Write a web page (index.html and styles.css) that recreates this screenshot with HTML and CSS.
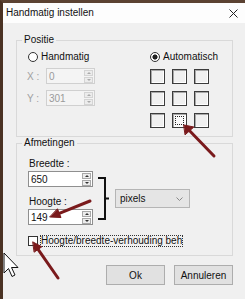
FILE: index.html
```html
<!DOCTYPE html>
<html lang="nl">
<head>
  <meta charset="UTF-8" />
  <title>Handmatig instellen</title>
  <link rel="stylesheet" href="styles.css">
</head>
<body>
  <div class="window">
    <div class="titlebar">
      <span class="title">Handmatig instellen</span>
      <svg class="close" width="9" height="9" viewBox="0 0 9 9">
        <path d="M0.5 0.5 L8.5 8.5 M8.5 0.5 L0.5 8.5" stroke="#222" stroke-width="1" fill="none"/>
      </svg>
    </div>

    <div class="content">
      <fieldset class="group">
        <legend>Positie</legend>
        <div class="pos-inner">
          <div class="col-left">
            <label class="radio"><span class="dot"></span>Handmatig</label>
            <div class="field">
              <span class="lbl">X :</span>
              <div class="spin-input disabled">
                <span class="val">0</span>
                <span class="spin"><i class="up"></i><i class="down"></i></span>
              </div>
            </div>
            <div class="field second">
              <span class="lbl">Y :</span>
              <div class="spin-input disabled">
                <span class="val">301</span>
                <span class="spin"><i class="up"></i><i class="down"></i></span>
              </div>
            </div>
          </div>
          <div class="col-right">
            <label class="radio"><span class="dot checked"></span>Automatisch</label>
            <div class="grid9">
              <span class="cell"></span><span class="cell"></span><span class="cell"></span>
              <span class="cell"></span><span class="cell"></span><span class="cell"></span>
              <span class="cell"></span><span class="cell selected"></span><span class="cell"></span>
            </div>
          </div>
        </div>
      </fieldset>

      <fieldset class="group dims">
        <legend>Afmetingen</legend>
        <div class="dim-inner">
          <div class="dim-row">
            <div class="dim-fields">
              <span class="dim-label">Breedte :</span>
              <div class="spin-input wide">
                <span class="val">650</span>
                <span class="spin"><i class="up"></i><i class="down"></i></span>
              </div>
              <span class="dim-label lower">Hoogte :</span>
              <div class="spin-input wide">
                <span class="val">149</span>
                <span class="spin"><i class="up"></i><i class="down"></i></span>
              </div>
            </div>
            <svg class="bracket" width="11" height="43" viewBox="0 0 11 43">
              <path d="M0 1 H7 V42 H0 M7 21.5 H11" stroke="#111" stroke-width="2" fill="none"/>
            </svg>
            <div class="select">
              <span>pixels</span>
              <svg width="7" height="4" viewBox="0 0 7 4"><path d="M0.5 0.5 L3.5 3.5 L6.5 0.5" stroke="#888" fill="none"/></svg>
            </div>
          </div>
          <div class="check-row">
            <span class="checkbox"></span>
            <span class="check-label">Hoogte/breedte-verhouding beh</span>
          </div>
        </div>
      </fieldset>

      <div class="actions">
        <button>Ok</button>
        <button>Annuleren</button>
      </div>
    </div>
  </div>

  <svg class="overlay" width="245" height="299" viewBox="0 0 245 299">
    <g stroke="#7a1a1c" stroke-width="3" stroke-linecap="round" fill="#7a1a1c">
      <line x1="214" y1="156" x2="189.6" y2="130.8"/>
      <polygon points="184,125 193.9,127 185.3,134.6" stroke-width="1"/>
      <line x1="90" y1="201" x2="59.3" y2="213.3"/>
      <polygon points="50,217 61,217.5 57.6,209.1" stroke-width="1"/>
      <line x1="58" y1="278" x2="38.1" y2="249.4"/>
      <polygon points="33,242 41.8,246.8 34.4,252" stroke-width="1"/>
    </g>
    <path d="M4 253 L4 273 L8.5 268.5 L12 276.5 L15 275 L11.5 267.5 L18 267.5 Z" fill="#fff" stroke="#111" stroke-width="1" stroke-linejoin="round"/>
  </svg>
</body>
</html>
```

FILE: styles.css
```css
body {
  margin: 0;
  width: 245px;
  height: 299px;
  overflow: hidden;
  position: relative;
  background: #f0f0f0;
  font-family: "Liberation Sans", Arial, sans-serif;
  font-size: 10px;
  color: #111;
}
.window {
  height: 299px;
  box-sizing: border-box;
  border-left: 3px solid #4a3223;
  border-top: 3px solid #5b4232;
  background: #f0f0f0;
}
.titlebar {
  height: 20px;
  background: #fdfdfd;
  display: flex;
  align-items: center;
  justify-content: space-between;
  padding: 0 7px 0 3px;
}
.title {
  font-size: 10px;
  line-height: 12px;
}
.content {
  padding: 11px 12px 0 13px;
}
fieldset.group {
  margin: 0;
  padding: 0;
  min-width: 0;
  border: 1px solid #d9d9d9;
}
fieldset.group legend {
  margin-left: 5px;
  padding: 0 2px;
  line-height: 12px;
}
.pos-inner {
  display: flex;
  padding: 5px 0 8px 10px;
}
.col-left {
  width: 123px;
  display: flex;
  flex-direction: column;
}
.radio {
  display: flex;
  align-items: center;
  height: 12px;
  line-height: 12px;
}
.col-left .radio .dot {
  margin-left: 1px;
}
.dot {
  width: 10px;
  height: 10px;
  box-sizing: border-box;
  border: 1px solid #333;
  border-radius: 50%;
  background: #fff;
  margin-right: 3px;
}
.dot.checked {
  background: radial-gradient(circle, #222 0 2.3px, #fff 2.8px);
}
.field {
  display: flex;
  align-items: center;
  margin-top: 5px;
  height: 16px;
}
.field.second {
  margin-top: 6px;
}
.lbl {
  width: 19px;
  color: #a0a0a0;
}
.spin-input {
  width: 49px;
  height: 16px;
  box-sizing: border-box;
  border: 1px solid #8f8f8f;
  background: #fff;
  display: flex;
  align-items: center;
  justify-content: space-between;
  padding-left: 2px;
}
.spin-input.disabled {
  border-color: #d0d0d0;
  background: #f4f4f4;
  color: #9a9a9a;
}
.spin-input.wide {
  width: 65px;
  margin-top: 1px;
}
.spin {
  display: flex;
  flex-direction: column;
  gap: 1px;
  margin-right: 1px;
}
.spin i {
  width: 9px;
  height: 6px;
  box-sizing: border-box;
  border: 1px solid #a8a8a8;
  background: #ececec;
  display: flex;
  align-items: center;
  justify-content: center;
}
.spin i::after {
  content: "";
  border-left: 2px solid transparent;
  border-right: 2px solid transparent;
}
.spin i.up::after {
  border-bottom: 2px solid #333;
}
.spin i.down::after {
  border-top: 2px solid #333;
}
.disabled .spin i {
  border-color: #d4d4d4;
}
.disabled .spin i.up::after {
  border-bottom-color: #aaa;
}
.disabled .spin i.down::after {
  border-top-color: #aaa;
}
.col-right {
  display: flex;
  flex-direction: column;
}
.grid9 {
  display: grid;
  grid-template-columns: repeat(3, 15px);
  grid-auto-rows: 15px;
  gap: 7px;
  margin-top: 6px;
}
.cell {
  box-sizing: border-box;
  border: 1px solid #3c3c3c;
  background: #f0f0f0;
  box-shadow: inset 1px 1px 0 #a8a8a8, inset -1px -1px 0 #fff;
}
.cell.selected {
  background: #fafafa;
  outline: 1px dotted #222;
  outline-offset: -4px;
}
.dims {
  margin-top: 10px;
}
.dim-inner {
  padding: 9px 0 8px 11px;
}
.dim-row {
  display: flex;
  align-items: flex-start;
}
.dim-fields {
  display: flex;
  flex-direction: column;
  width: 65px;
}
.dim-label {
  line-height: 12px;
  padding-left: 1px;
}
.dim-label.lower {
  margin-top: 9px;
}
.bracket {
  margin: 19px 0 0 5px;
}
.select {
  margin: 31px 0 0 6px;
  width: 75px;
  height: 19px;
  box-sizing: border-box;
  border: 1px solid #b5b5b5;
  background: #e5e5e5;
  display: flex;
  align-items: center;
  justify-content: space-between;
  padding: 0 6px 0 4px;
}
.check-row {
  display: flex;
  align-items: center;
  height: 12px;
  margin-top: 10px;
}
.checkbox {
  width: 10px;
  height: 10px;
  box-sizing: border-box;
  border: 1px solid #333;
  background: #fff;
  margin-right: 2px;
}
.check-label {
  height: 12px;
  line-height: 10px;
  box-sizing: border-box;
  border: 1px dotted #333;
  white-space: nowrap;
}
.actions {
  display: flex;
  justify-content: flex-end;
  gap: 9px;
  margin-top: 9px;
}
.actions button {
  width: 59px;
  height: 20px;
  border: 1px solid #adadad;
  background: #e1e1e1;
  font-family: "Liberation Sans", Arial, sans-serif;
  font-size: 10px;
  color: #111;
  padding: 0;
}
.overlay {
  position: absolute;
  top: 0;
  left: 0;
  pointer-events: none;
}
```
